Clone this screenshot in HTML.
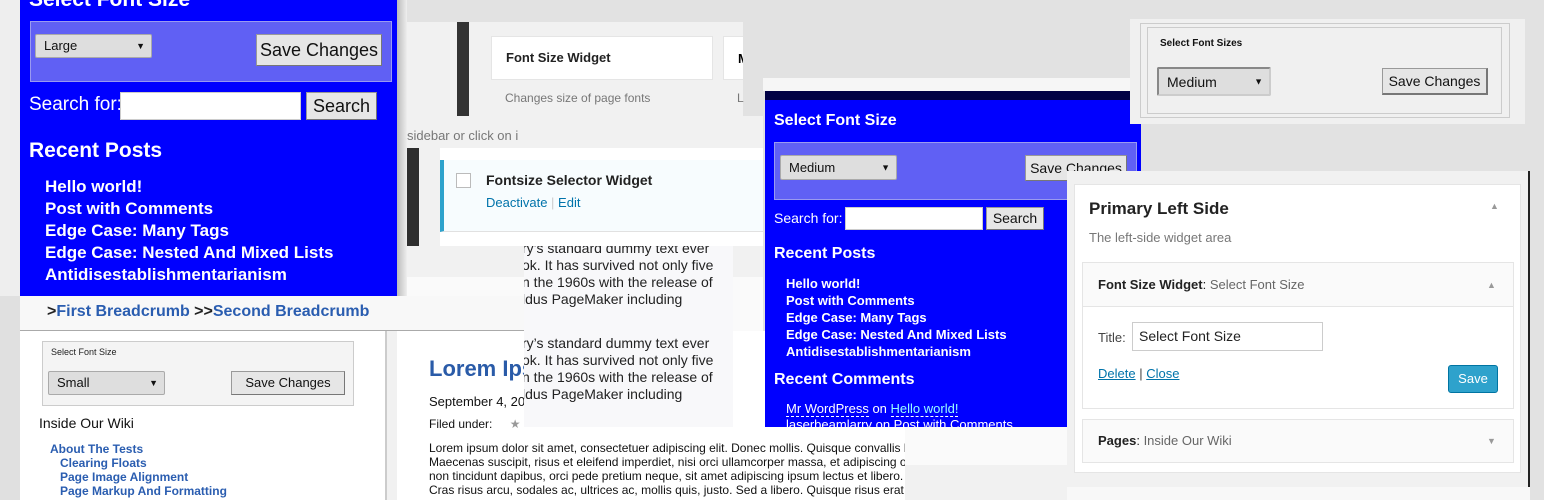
<!DOCTYPE html>
<html><head><meta charset="utf-8"><style>
*{margin:0;padding:0;box-sizing:border-box}
body{width:1544px;height:500px;overflow:hidden;position:relative;background:#e2e2e2;font-family:"Liberation Sans",sans-serif}
.a{position:absolute}
.sel{position:absolute;background:#dedede;border:1px solid #aaa;border-radius:2px;color:#111;padding-left:8px;white-space:nowrap}
.sel:after{content:"▼";position:absolute;right:6px;top:50%;transform:translateY(-50%);font-size:9px}
.btn{position:absolute;background:#e6e6e6;border:1px solid #999;border-right-color:#777;border-bottom-color:#777;color:#111;text-align:center;white-space:nowrap;overflow:hidden}
.w{color:#fff;font-weight:bold;white-space:nowrap}
</style></head><body>
<div class="a" style="left:0;top:0;width:20px;height:500px;background:#eeeeee"></div>
<div class="a" style="left:0;top:296px;width:20px;height:204px;background:#e0e0e0"></div>

<div class="a" style="left:407px;top:22px;width:336px;height:94px;background:#f1f1f1"></div>
<div class="a" style="left:457px;top:22px;width:12px;height:94px;background:#333"></div>
<div class="a" style="left:491px;top:36px;width:222px;height:44px;background:#fff;border:1px solid #e5e5e5"></div>
<div class="a" style="left:506px;top:50px;font-size:13px;font-weight:bold;color:#222">Font Size Widget</div>
<div class="a" style="left:723px;top:36px;width:20px;height:44px;background:#fff;border:1px solid #e5e5e5;border-right:none;overflow:hidden"><span style="position:absolute;left:14px;top:14px;font-size:13px;font-weight:bold">M</span></div>
<div class="a" style="left:505px;top:91px;font-size:12px;color:#777">Changes size of page fonts</div>
<div class="a" style="left:737px;top:91px;font-size:12px;color:#777">L</div>
<div class="a" style="left:407px;top:116px;width:356px;height:161px;background:#f1f1f1"></div>
<div class="a" style="left:407px;top:277px;width:356px;height:54px;background:#fafafa"></div>
<div class="a" style="left:407px;top:128px;font-size:13px;color:#777">sidebar or click on i</div>
<div class="a" style="left:402px;top:148px;width:17px;height:98px;background:#2e2e2e"></div>
<div class="a" style="left:440px;top:148px;width:323px;height:98px;background:#fff"></div>
<div class="a" style="left:440px;top:160px;width:323px;height:72px;background:#f7fcfe;border-left:4px solid #2ea2cc;border-bottom:1px solid #e1e1e1"></div>
<div class="a" style="left:456px;top:173px;width:15px;height:15px;border:1px solid #bbb;background:#fff"></div>
<div class="a" style="left:486px;top:172px;font-size:14px;font-weight:bold;color:#222">Fontsize Selector Widget</div>
<div class="a" style="left:486px;top:195px;font-size:13px;color:#0073aa">Deactivate <span style="color:#ccc">|</span> Edit</div>

<div class="a" style="left:397px;top:0;width:10px;height:296px;background:linear-gradient(90deg,#bbb,#eee)"></div>
<div class="a" style="left:20px;top:0;width:377px;height:296px;background:#0000ff"></div>
<div class="a w" style="left:29px;top:-12px;font-size:21px">Select Font Size</div>
<div class="a" style="left:30px;top:21px;width:362px;height:61px;background:#6060f4;border:1px solid #9a9af0"></div>
<div class="sel" style="left:35px;top:34px;width:117px;height:24px;font-size:13px;line-height:22px">Large</div>
<div class="btn" style="left:256px;top:34px;width:126px;height:32px;font-size:18px;line-height:30px">Save Changes</div>
<div class="a" style="left:29px;top:94px;font-size:19px;color:#fff;white-space:nowrap">Search for:</div>
<div class="a" style="left:120px;top:92px;width:181px;height:28px;background:#fff;border:1px solid #ccc"></div>
<div class="btn" style="left:306px;top:92px;width:71px;height:28px;font-size:18px;line-height:26px">Search</div>
<div class="a w" style="left:29px;top:139px;font-size:21px">Recent Posts</div>
<div class="a w" style="left:45px;top:176px;font-size:17px;line-height:22px">Hello world!<br>Post with Comments<br>Edge Case: Many Tags<br>Edge Case: Nested And Mixed Lists<br>Antidisestablishmentarianism</div>

<div class="a" style="left:20px;top:296px;width:504px;height:35px;background:#f8f8f8;border-bottom:1px solid #aaa"></div>
<div class="a" style="left:47px;top:303px;font-size:16px;font-weight:bold;color:#222;white-space:nowrap">&gt;<span style="color:#2a5db0">First Breadcrumb</span> &gt;&gt;<span style="color:#2a5db0">Second Breadcrumb</span></div>

<div class="a" style="left:20px;top:331px;width:367px;height:169px;background:#fff;border-right:2px solid #ccc"></div>
<div class="a" style="left:387px;top:331px;width:10px;height:169px;background:#f1f1f1"></div>
<div class="a" style="left:42px;top:341px;width:312px;height:65px;background:#f4f4f4;border:1px solid #ccc"></div>
<div class="a" style="left:51px;top:347px;font-size:9px;color:#222">Select Font Size</div>
<div class="sel" style="left:48px;top:371px;width:117px;height:24px;font-size:13px;line-height:22px">Small</div>
<div class="btn" style="left:231px;top:371px;width:114px;height:24px;font-size:13px;line-height:22px">Save Changes</div>
<div class="a" style="left:39px;top:415px;font-size:14px;color:#111">Inside Our Wiki</div>
<div class="a" style="left:50px;top:442px;font-size:12px;font-weight:bold;color:#2a5db0;line-height:14px;white-space:nowrap">About The Tests<br><span style="padding-left:10px">Clearing Floats</span><br><span style="padding-left:10px">Page Image Alignment</span><br><span style="padding-left:10px">Page Markup And Formatting</span></div>

<div class="a" style="left:397px;top:331px;width:508px;height:169px;background:#fff"></div>
<div class="a" style="left:429px;top:356px;font-size:22px;font-weight:bold;color:#2a5ba8">Lorem Ipsum</div>
<div class="a" style="left:429px;top:394px;font-size:13px;color:#111">September 4, 2008</div>
<div class="a" style="left:429px;top:417px;font-size:12px;color:#111">Filed under: <span style="color:#999;padding-left:14px">★</span></div>
<div class="a" style="left:429px;top:441px;width:476px;overflow:hidden;white-space:nowrap;font-size:12px;line-height:14px;color:#111">Lorem ipsum dolor sit amet, consectetuer adipiscing elit. Donec mollis. Quisque convallis libero<br>Maecenas suscipit, risus et eleifend imperdiet, nisi orci ullamcorper massa, et adipiscing orci<br>non tincidunt dapibus, orci pede pretium neque, sit amet adipiscing ipsum lectus et libero.<br>Cras risus arcu, sodales ac, ultrices ac, mollis quis, justo. Sed a libero. Quisque risus erat</div>

<div class="a" style="left:524px;top:246px;width:209px;height:181px;background:#f8f8fa;overflow:hidden;font-size:14px;line-height:17px;color:#222;white-space:nowrap">
<div style="position:absolute;left:-2px;top:-6px">ry’s standard dummy text ever<br>ok. It has survived not only five<br>n the 1960s with the release of<br>ldus PageMaker including</div>
<div style="position:absolute;left:-2px;top:89px">ry’s standard dummy text ever<br>ok. It has survived not only five<br>n the 1960s with the release of<br>ldus PageMaker including</div>
</div>
<div class="a" style="left:905px;top:427px;width:162px;height:38px;background:#fafafa"></div>
<div class="a" style="left:905px;top:465px;width:162px;height:35px;background:#f1f1f1"></div>

<div class="a" style="left:763px;top:78px;width:390px;height:13px;background:#f6f6f6"></div>
<div class="a" style="left:765px;top:91px;width:376px;height:336px;background:#0000ff;overflow:hidden">
<div style="position:absolute;left:0;top:0;width:376px;height:9px;background:#000044"></div>
<div class="w" style="position:absolute;left:9px;top:21px;font-size:16px">Select Font Size</div>
<div style="position:absolute;left:9px;top:51px;width:363px;height:58px;background:#6060f4;border:1px solid #9a9af0"></div>
<div class="sel" style="left:15px;top:64px;width:117px;height:25px;font-size:13px;line-height:23px">Medium</div>
<div class="btn" style="left:260px;top:64px;width:102px;height:26px;font-size:14px;line-height:24px">Save Changes</div>
<div style="position:absolute;left:9px;top:119px;font-size:14px;color:#fff">Search for:</div>
<div style="position:absolute;left:80px;top:116px;width:138px;height:23px;background:#fff;border:1px solid #ccc"></div>
<div class="btn" style="left:221px;top:116px;width:58px;height:23px;font-size:14px;line-height:21px">Search</div>
<div class="w" style="position:absolute;left:9px;top:154px;font-size:16px">Recent Posts</div>
<div class="w" style="position:absolute;left:21px;top:184px;font-size:13px;line-height:17px">Hello world!<br>Post with Comments<br>Edge Case: Many Tags<br>Edge Case: Nested And Mixed Lists<br>Antidisestablishmentarianism</div>
<div class="w" style="position:absolute;left:9px;top:280px;font-size:16px">Recent Comments</div>
<div style="position:absolute;left:21px;top:310px;font-size:13px;line-height:16px;color:#fff;white-space:nowrap"><span style="border-bottom:1px dashed #fff">Mr WordPress</span> on <span style="color:#9ff;border-bottom:1px dashed #fff">Hello world!</span><br>laserbeamlarry on Post with Comments</div>
</div>

<div class="a" style="left:1130px;top:19px;width:395px;height:105px;background:#f0f0f0"></div>
<div class="a" style="left:1140px;top:23px;width:370px;height:95px;border:1px solid #ccc"></div>
<div class="a" style="left:1147px;top:27px;width:355px;height:87px;border:1px solid #ccc"></div>
<div class="a" style="left:1160px;top:38px;font-size:10px;font-weight:bold;color:#111">Select Font Sizes</div>
<div class="sel" style="left:1157px;top:67px;width:114px;height:29px;font-size:14px;line-height:27px;border:2px solid #888;border-right-color:#ccc;border-bottom-color:#ccc">Medium</div>
<div class="btn" style="left:1382px;top:68px;width:106px;height:27px;font-size:14px;line-height:25px;border-width:1px 2px 2px 1px">Save Changes</div>

<div class="a" style="left:1067px;top:171px;width:463px;height:316px;background:#f1f1f1;border-right:2px solid #222"></div>
<div class="a" style="left:1067px;top:487px;width:463px;height:13px;background:#f8f8f8"></div>
<div class="a" style="left:1074px;top:184px;width:447px;height:289px;background:#fff;border:1px solid #e5e5e5"></div>
<div class="a" style="left:1089px;top:199px;font-size:17px;font-weight:bold;color:#222">Primary Left Side</div>
<div class="a" style="left:1490px;top:201px;font-size:9px;color:#999">▲</div>
<div class="a" style="left:1089px;top:230px;font-size:13px;color:#777">The left-side widget area</div>
<div class="a" style="left:1082px;top:262px;width:432px;height:147px;background:#fff;border:1px solid #e5e5e5"></div>
<div class="a" style="left:1083px;top:263px;width:430px;height:44px;background:#fafafa;border-bottom:1px solid #e5e5e5"></div>
<div class="a" style="left:1098px;top:277px;font-size:13px;font-weight:bold;color:#222">Font Size Widget<span style="font-weight:normal">:</span> <span style="font-weight:normal;color:#666">Select Font Size</span></div>
<div class="a" style="left:1487px;top:280px;font-size:9px;color:#999">▲</div>
<div class="a" style="left:1098px;top:330px;font-size:13px;color:#444">Title:</div>
<div class="a" style="left:1132px;top:322px;width:191px;height:29px;border:1px solid #ccc;background:#fff;font-size:14px;line-height:27px;padding-left:6px;color:#222">Select Font Size</div>
<div class="a" style="left:1098px;top:366px;font-size:13px;color:#0073aa"><u>Delete</u> <span style="color:#444">|</span> <u>Close</u></div>
<div class="a" style="left:1448px;top:365px;width:50px;height:28px;background:#2ea2cc;border:1px solid #0074a2;border-radius:3px;color:#fff;font-size:13px;line-height:26px;text-align:center">Save</div>
<div class="a" style="left:1082px;top:419px;width:432px;height:44px;background:#fafafa;border:1px solid #e5e5e5"></div>
<div class="a" style="left:1098px;top:433px;font-size:13px;font-weight:bold;color:#222">Pages<span style="font-weight:normal">:</span> <span style="font-weight:normal;color:#666">Inside Our Wiki</span></div>
<div class="a" style="left:1487px;top:436px;font-size:9px;color:#999">▼</div>
</body></html>
